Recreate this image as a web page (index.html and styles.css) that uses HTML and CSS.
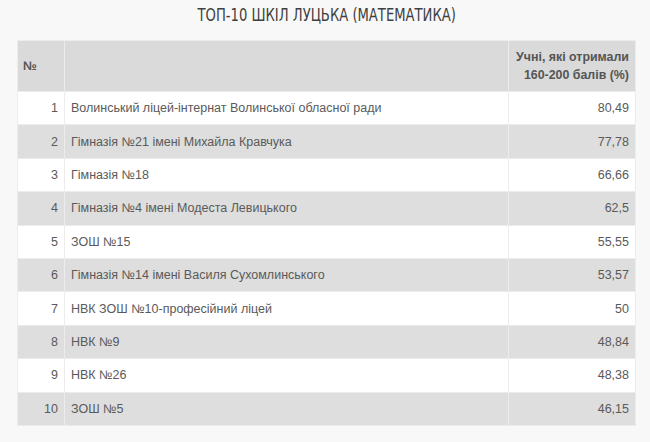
FILE: index.html
```html
<!DOCTYPE html>
<html lang="uk">
<head>
<meta charset="utf-8">
<link rel="stylesheet" href="styles.css">
</head>
<body>
<div class="page">
  <h1 class="title"><span class="title-text">ТОП-10 ШКІЛ ЛУЦЬКА (МАТЕМАТИКА)</span></h1>
  <table class="rating">
    <thead>
      <tr>
        <th class="num">№</th>
        <th class="name"></th>
        <th class="val">Учні, які отримали<br>160-200 балів (%)</th>
      </tr>
    </thead>
    <tbody>
      <tr><td class="num">1</td><td class="name">Волинський ліцей-інтернат Волинської обласної ради</td><td class="val">80,49</td></tr>
      <tr><td class="num">2</td><td class="name">Гімназія №21 імені Михайла Кравчука</td><td class="val">77,78</td></tr>
      <tr><td class="num">3</td><td class="name">Гімназія №18</td><td class="val">66,66</td></tr>
      <tr><td class="num">4</td><td class="name">Гімназія №4 імені Модеста Левицького</td><td class="val">62,5</td></tr>
      <tr><td class="num">5</td><td class="name">ЗОШ №15</td><td class="val">55,55</td></tr>
      <tr><td class="num">6</td><td class="name">Гімназія №14 імені Василя Сухомлинського</td><td class="val">53,57</td></tr>
      <tr><td class="num">7</td><td class="name">НВК ЗОШ №10-професійний ліцей</td><td class="val">50</td></tr>
      <tr><td class="num">8</td><td class="name">НВК №9</td><td class="val">48,84</td></tr>
      <tr><td class="num">9</td><td class="name">НВК №26</td><td class="val">48,38</td></tr>
      <tr><td class="num">10</td><td class="name">ЗОШ №5</td><td class="val">46,15</td></tr>
    </tbody>
  </table>
</div>
</body>
</html>
```
FILE: styles.css
```css
html, body {
  margin: 0;
  padding: 0;
  background: #f8f8f8;
}
.page {
  width: 650px;
  height: 442px;
  padding: 0 14px 0 17px;
  box-sizing: border-box;
}
.title {
  margin: 0;
  height: 40px;
  padding-top: 3px;
  box-sizing: border-box;
  text-align: center;
  font-family: "DejaVu Sans Condensed", "DejaVu Sans", sans-serif;
  font-weight: normal;
  font-size: 17.5px;
  line-height: 24px;
  color: #404040;
}
.title-text {
  display: inline-block;
  transform: scaleX(0.835);
  white-space: nowrap;
}
.rating {
  width: 619px;
  border-collapse: collapse;
  table-layout: fixed;
  font-family: "Liberation Sans", Arial, sans-serif;
  font-size: 12.5px;
  color: #5a5a5a;
}
.rating th, .rating td {
  border: 1px solid #ececec;
  padding: 0 6px;
}
.rating th {
  background: #dadada;
  height: 51px;
  box-sizing: border-box;
  font-weight: bold;
  font-size: 12.4px;
  line-height: 18px;
  white-space: nowrap;
  color: #555;
}
.rating td {
  height: 33.4px;
  box-sizing: border-box;
}
.rating tbody tr:nth-child(odd) td {
  background: #ffffff;
}
.rating tbody tr:nth-child(even) td {
  background: #dedede;
}
.rating .num {
  width: 47px;
  box-sizing: border-box;
  text-align: right;
}
.rating th.num {
  text-align: left;
  padding-left: 5px;
}
.rating .name {
  text-align: left;
}
.rating .val {
  width: 127px;
  box-sizing: border-box;
  text-align: right;
}
```
